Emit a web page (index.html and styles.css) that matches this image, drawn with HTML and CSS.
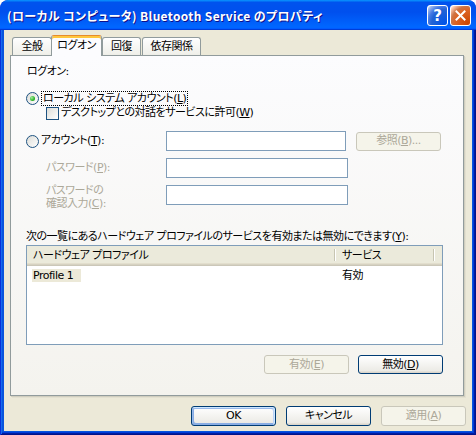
FILE: index.html
```html
<!DOCTYPE html>
<html lang="ja">
<head>
<meta charset="utf-8">
<title>Bluetooth Service のプロパティ</title>
<link rel="stylesheet" href="styles.css">
</head>
<body>
<div class="window">
  <div class="titlebar">
    <span class="title">(ローカル コンピュータ) Bluetooth Service のプロパティ</span>
    <div class="caption-buttons">
      <span class="cap-btn help">?</span>
      <span class="cap-btn close"><svg width="13" height="13" viewBox="0 0 13 13"><path d="M2.5 2.5 L10.5 10.5 M10.5 2.5 L2.5 10.5" stroke="#fff" stroke-width="2" stroke-linecap="square"/></svg></span>
    </div>
  </div>
  <div class="frame">
    <div class="client">
      <div class="tabs">
        <span class="tab t1">全般</span>
        <span class="tab active">ログオン</span>
        <span class="tab t3">回復</span>
        <span class="tab t4">依存関係</span>
      </div>
      <div class="panel">
        <div class="line first-label">ログオン:</div>
        <div class="option radio-row">
          <span class="radio checked"></span>
          <span class="focus">ローカル システム アカウント(<u>L</u>)</span>
        </div>
        <div class="option check-row">
          <span class="checkbox"></span>
          <span class="check-label">デスクトップとの対話をサービスに許可(<u>W</u>)</span>
        </div>
        <div class="account-grid">
          <div class="option"><span class="radio"></span><span class="radio-label">アカウント(<u>T</u>):</span></div>
          <span class="textbox tb1"></span>
          <span class="btn disabled">参照(<u>B</u>)...</span>
          <div class="sub-label">パスワード(<u>P</u>):</div>
          <span class="textbox"></span>
          <span></span>
          <div class="sub-label two-line">パスワードの<br>確認入力(<u>C</u>):</div>
          <span class="textbox"></span>
          <span></span>
        </div>
        <div class="line list-label">次の一覧にあるハードウェア プロファイルのサービスを有効または無効にできます(<u>Y</u>):</div>
        <div class="listview">
          <div class="lv-header">
            <span class="hcol c1">ハードウェア プロファイル</span>
            <span class="hcol c2">サービス</span>
            <span class="hcol c3"></span>
          </div>
          <div class="lv-row">
            <span class="cell c1"><span class="sel">Profile 1</span></span>
            <span class="cell c2">有効</span>
          </div>
        </div>
        <div class="panel-buttons">
          <span class="btn disabled">有効(<u>E</u>)</span>
          <span class="btn">無効(<u>D</u>)</span>
        </div>
      </div>
      <div class="footer">
        <span class="btn default">OK</span>
        <span class="btn">キャンセル</span>
        <span class="btn disabled">適用(<u>A</u>)</span>
      </div>
    </div>
  </div>
</div>
</body>
</html>
```

FILE: styles.css
```css
* { box-sizing: border-box; }

html, body {
  margin: 0;
  padding: 0;
  background: #ffffff;
}

body {
  font-family: "DejaVu Sans", "Noto Sans CJK JP", sans-serif;
  font-size: 11px;
  line-height: 14px;
  letter-spacing: -0.5px;
  font-feature-settings: "palt";
  color: #000;
}

u { text-decoration: underline; text-underline-offset: 1px; }

.window {
  width: 476px;
  height: 435px;
  display: flex;
  flex-direction: column;
  border-radius: 8px 8px 0 0;
  overflow: hidden;
  background: #0831d9;
}

/* ---------- title bar ---------- */
.titlebar {
  height: 30px;
  flex: none;
  display: flex;
  align-items: center;
  padding: 0 5px 0 7px;
  background: linear-gradient(180deg, #0997ff, #0053ee 8%, #0050ee 40%, #0066ff 88%, #0066ff 93%, #005bff 95%, #003dd7 96%, #003dd7);
  border-radius: 8px 8px 0 0;
}

.title {
  flex: 1;
  color: #fff;
  font-family: "Noto Sans CJK JP", sans-serif;
  font-weight: bold;
  font-size: 12px;
  letter-spacing: 0.35px;
  text-shadow: 1px 1px 0 #0f1089;
  white-space: nowrap;
  padding-top: 1px;
}

.caption-buttons {
  display: flex;
  gap: 2px;
  margin-top: 1px;
}

.cap-btn {
  width: 21px;
  height: 21px;
  border: 1px solid #fff;
  border-radius: 3px;
  display: flex;
  align-items: center;
  justify-content: center;
  color: #fff;
  font-family: "DejaVu Sans", sans-serif;
  font-weight: bold;
  font-size: 15px;
  letter-spacing: 0;
}

.help {
  background: radial-gradient(circle at 90% 90%, #0054e9 0%, #2263d5 55%, #4479e4 70%, #a3bbec 90%, #fff 100%);
}

.close {
  background: radial-gradient(circle at 90% 90%, #cc4600 0%, #dc6527 55%, #cd7546 70%, #ffccb2 90%, #fff 100%);
}

/* ---------- frame / client ---------- */
.frame {
  flex: 1;
  display: flex;
  padding: 0 4px 4px;
  background: #0855dd;
  box-shadow: inset 1px 0 #0831d9, inset -1px 0 #00138c, inset 0 -1px #00138c,
              inset 2px 0 #166aee, inset -2px 0 #001ea0, inset 0 -2px #001ea0,
              inset -3px 0 #003bda, inset 0 -3px #003bda;
}

.client {
  flex: 1;
  display: flex;
  flex-direction: column;
  background: #ece9d8;
  padding: 5px 6px 5px 6px;
}

/* ---------- tabs ---------- */
.tabs {
  height: 20px;
  display: flex;
  align-items: flex-end;
  padding-left: 2px;
  gap: 1px;
}

.tab {
  height: 18px;
  border: 1px solid #919b9c;
  border-bottom: none;
  border-radius: 3px 3px 0 0;
  background: linear-gradient(180deg, #fff, #fafaf9 26%, #f0f0ea 95%, #ecebe5);
  padding-top: 2px;
  display: flex;
  justify-content: center;
  white-space: nowrap;
  line-height: 14px;
}

.tab.t1 { width: 40px; }
.tab.t3 { width: 39px; }
.tab.t4 { width: 59px; }

.tab.active {
  position: relative;
  z-index: 1;
  height: 21px;
  width: 51px;
  margin: 0 -1px -1px -2px;
  background: #fcfcfe;
  border-color: #919b9c;
  border-top: 1px solid #e68b2c;
  box-shadow: inset 0 2px #ffc73c;
  padding-top: 3px;
}

/* ---------- panel ---------- */
.panel {
  flex: 1;
  width: 454px;
  border: 1px solid #919b9c;
  background: linear-gradient(180deg, #fcfcfe, #f4f3ee);
  box-shadow: 1px 1px 0 #d0cebf, 2px 2px 0 #e3e0d0;
  padding: 0 20px 0 15px;
  display: flex;
  flex-direction: column;
}

.line { white-space: nowrap; }

.first-label { margin-top: 9px; padding-left: 1px; }

.option {
  display: flex;
  align-items: center;
  height: 14px;
}

.radio-row { margin-top: 12px; }

.radio {
  width: 13px;
  height: 13px;
  flex: none;
  border: 1px solid #1d5281;
  border-radius: 50%;
  background: linear-gradient(135deg, #dcdcd7, #fff);
  display: flex;
  align-items: center;
  justify-content: center;
}

.radio.checked::after {
  content: "";
  width: 5px;
  height: 5px;
  border-radius: 50%;
  background: radial-gradient(circle at 35% 35%, #a6ec9e, #2bb52b 60%, #1b8a1b);
}

.focus {
  margin-left: 2px;
  padding: 0 1px;
  border: 1px dotted #000;
  line-height: 13px;
  white-space: nowrap;
}

.radio-label { margin-left: 2px; white-space: nowrap; }

.check-row {
  margin-top: 1px;
  padding-left: 20px;
}

.checkbox {
  width: 13px;
  height: 13px;
  flex: none;
  border: 1px solid #1d5281;
  background: linear-gradient(135deg, #dcdcd7, #fff);
}

.check-label { margin-left: 2px; white-space: nowrap; }

.account-grid {
  margin-top: 11px;
  display: grid;
  grid-template-columns: 140px 190px 85px;
  grid-auto-rows: 20px;
  row-gap: 7px;
  align-items: center;
}

.account-grid .textbox { width: 182px; }
.account-grid .tb1 { width: 180px; }

.account-grid .btn { height: 19px; align-self: center; }

.sub-label {
  padding-left: 20px;
  color: #aca899;
  white-space: nowrap;
}

.sub-label.two-line {
  align-self: start;
  line-height: 13px;
  margin-top: -1px;
}

.textbox {
  height: 20px;
  border: 1px solid #7f9db9;
  background: #fff;
}

.list-label { margin-top: 25px; }

/* ---------- list view ---------- */
.listview {
  margin-top: 1px;
  height: 100px;
  border: 1px solid #7f9db9;
  background: #fff;
}

.lv-header {
  display: flex;
  height: 20px;
  background: #ebeadb;
  box-shadow: inset 0 -1px #cbc7b8, inset 0 -2px #d6d2c2, inset 0 -3px #e2decd;
}

.hcol {
  position: relative;
  padding: 3px 0 0 6px;
  white-space: nowrap;
}

.hcol.c1::after, .hcol.c2::after {
  content: "";
  position: absolute;
  right: 0;
  top: 3px;
  bottom: 5px;
  width: 2px;
  background: linear-gradient(90deg, #c7c5b2 50%, #fff 50%);
}

.c1 { width: 309px; }
.c2 { width: 99px; }
.c3 { flex: 1; }

.lv-row {
  display: flex;
  margin-top: 3px;
  height: 13px;
}

.cell { padding-left: 6px; white-space: nowrap; line-height: 13px; }
.cell.c1 { padding-left: 5px; }

.sel {
  display: inline-block;
  background: #ece9d8;
  padding: 0 8px 0 1px;
}

/* ---------- buttons ---------- */
.btn {
  width: 85px;
  height: 19px;
  display: flex;
  align-items: center;
  justify-content: center;
  border: 1px solid #003c74;
  border-radius: 3px;
  background: linear-gradient(180deg, #fff, #ecebe6 86%, #d6d0c5);
  white-space: nowrap;
  line-height: 14px;
}

.btn.disabled {
  background: #f5f4ea;
  border-color: #c9c7ba;
  color: #aca899;
}

.btn.default {
  box-shadow: inset -1px 1px #cee7ff, inset 1px 2px #98b8ea, inset -2px 2px #bcd4f6, inset 1px -1px #89ade4, inset 2px -2px #89ade4;
}

.panel-buttons {
  margin-top: 10px;
  display: flex;
  justify-content: flex-end;
  gap: 9px;
}

.footer {
  margin-top: 10px;
  height: 20px;
  display: flex;
  justify-content: flex-end;
  gap: 10px;
}

.footer .btn { height: 20px; }
```
